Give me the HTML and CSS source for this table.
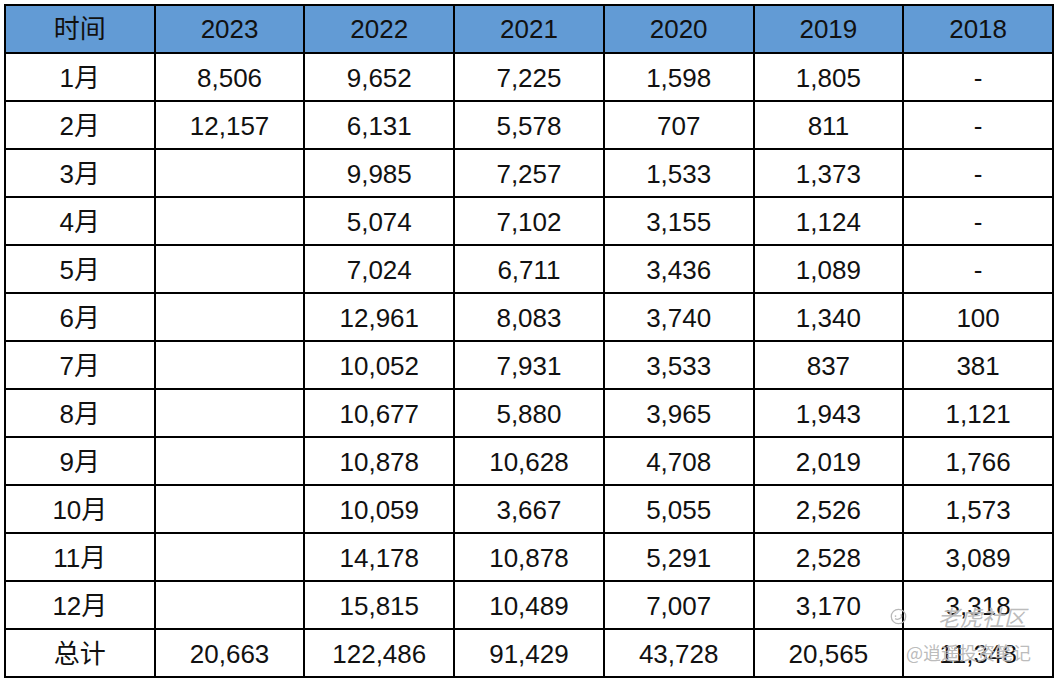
FILE: index.html
```html
<!DOCTYPE html>
<html lang="zh">
<head>
<meta charset="utf-8">
<link rel="stylesheet" href="styles.css">
</head>
<body>
<div class="wrap">
<table class="data">
<colgroup><col><col><col><col><col><col><col></colgroup>
<thead>
<tr><th>时间</th><th>2023</th><th>2022</th><th>2021</th><th>2020</th><th>2019</th><th>2018</th></tr>
</thead>
<tbody>
<tr><td>1月</td><td>8,506</td><td>9,652</td><td>7,225</td><td>1,598</td><td>1,805</td><td>-</td></tr>
<tr><td>2月</td><td>12,157</td><td>6,131</td><td>5,578</td><td>707</td><td>811</td><td>-</td></tr>
<tr><td>3月</td><td></td><td>9,985</td><td>7,257</td><td>1,533</td><td>1,373</td><td>-</td></tr>
<tr><td>4月</td><td></td><td>5,074</td><td>7,102</td><td>3,155</td><td>1,124</td><td>-</td></tr>
<tr><td>5月</td><td></td><td>7,024</td><td>6,711</td><td>3,436</td><td>1,089</td><td>-</td></tr>
<tr><td>6月</td><td></td><td>12,961</td><td>8,083</td><td>3,740</td><td>1,340</td><td>100</td></tr>
<tr><td>7月</td><td></td><td>10,052</td><td>7,931</td><td>3,533</td><td>837</td><td>381</td></tr>
<tr><td>8月</td><td></td><td>10,677</td><td>5,880</td><td>3,965</td><td>1,943</td><td>1,121</td></tr>
<tr><td>9月</td><td></td><td>10,878</td><td>10,628</td><td>4,708</td><td>2,019</td><td>1,766</td></tr>
<tr><td>10月</td><td></td><td>10,059</td><td>3,667</td><td>5,055</td><td>2,526</td><td>1,573</td></tr>
<tr><td>11月</td><td></td><td>14,178</td><td>10,878</td><td>5,291</td><td>2,528</td><td>3,089</td></tr>
<tr><td>12月</td><td></td><td>15,815</td><td>10,489</td><td>7,007</td><td>3,170</td><td>3,318</td></tr>
<tr><td>总计</td><td>20,663</td><td>122,486</td><td>91,429</td><td>43,728</td><td>20,565</td><td>11,348</td></tr>
</tbody>
</table>
<div class="watermark">
  <div class="wm-top">
    <svg class="wm-logo" viewBox="0 0 20 20" width="17" height="17" aria-hidden="true">
      <circle cx="10" cy="10" r="8.5" fill="none" stroke="#b8b8b8" stroke-width="1.5"/>
      <path d="M6 12.5 Q9 14.5 13 11.5 Q14.5 9 12.5 7.5" fill="none" stroke="#b8b8b8" stroke-width="1.5"/>
      <circle cx="6.5" cy="9.5" r="1" fill="#b8b8b8"/>
    </svg>
    <span class="wm-brand">老虎社区</span>
  </div>
  <div class="wm-author">@逍遥投资笔记</div>
</div>
</div>
</body>
</html>
```
FILE: styles.css
```css
html, body {
  margin: 0;
  padding: 0;
  background: #ffffff;
}
.wrap {
  position: relative;
  padding: 4px 0 0 4px;
  width: 1058px;
  height: 682px;
  box-sizing: border-box;
}
.data {
  border-collapse: collapse;
  table-layout: fixed;
  width: 1050px;
  font-family: "Liberation Sans", Arial, "Noto Sans CJK SC", sans-serif;
  font-size: 26px;
  color: #111111;
}
.data th,
.data td {
  border: 2px solid #000000;
  height: 46px;
  padding: 0;
  text-align: center;
  vertical-align: middle;
  font-weight: normal;
  line-height: 28px;
}
.data tbody td {
  height: 45px;
  padding-top: 1px;
}
.data thead th {
  background: #629bd5;
}
.watermark {
  position: absolute;
  left: 888px;
  top: 603px;
  font-family: "Noto Sans CJK SC", sans-serif;
  color: rgba(170, 170, 170, 0.8);
  pointer-events: none;
}
.wm-top {
  display: flex;
  align-items: center;
  gap: 31px;
}
.wm-logo {
  margin-left: 2px;
}
.wm-brand {
  font-size: 22px;
  line-height: 26px;
  font-style: italic;
  text-shadow: 0 0 1px #ffffff;
}
.wm-author {
  margin-top: 13px;
  margin-left: 18px;
  font-size: 18px;
  line-height: 20px;
  text-shadow: 0 0 1px #ffffff;
}
```
